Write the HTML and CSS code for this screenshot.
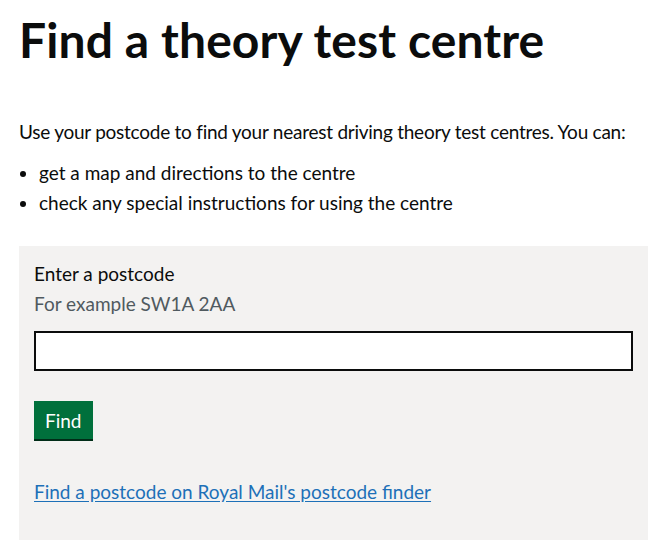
FILE: index.html
```html
<!DOCTYPE html>
<html lang="en">
<head>
    <meta charset="UTF-8">
    <meta name="viewport" content="width=device-width, initial-scale=1.0">
    <title>Find a theory test centre</title>
    <link rel="stylesheet" href="styles.css">
</head>
<body>
    <main class="page">
        <h1 class="title">Find a theory test centre</h1>

        <p class="intro">Use your postcode to find your nearest driving theory test centres. You can:</p>
        <ul class="points">
            <li>get a map and directions to the centre</li>
            <li>check any special instructions for using the centre</li>
        </ul>

        <form class="finder">
            <label class="label" for="postcode">Enter a postcode</label>
            <div class="hint">For example SW1A 2AA</div>
            <input class="input" type="text" id="postcode" name="postcode">
            <button class="find-btn" type="button">Find</button>
            <a class="link" href="#">Find a postcode on Royal Mail's postcode finder</a>
        </form>
    </main>
</body>
</html>
```

FILE: styles.css
```css
body {
    margin: 0;
    font-family: Lato, Arial, sans-serif;
    color: #0b0c0c;
    background-color: #fff;
}

.page {
    width: 629px;
    padding: 0 0 10px 19px;
}

.title {
    font-size: 48px;
    font-weight: 700;
    line-height: 1;
    margin: 16px 0 0;
    letter-spacing: 0.1px;
}

.intro {
    font-size: 19px;
    line-height: 25px;
    letter-spacing: -0.25px;
    margin: 55px 0 16px;
}

.points {
    font-size: 19px;
    line-height: 25px;
    margin: 0 0 31px;
    padding-left: 20px;
}

.points li {
    margin-bottom: 5px;
}

.finder {
    background-color: #f3f2f1;
    padding: 15px 15px 36px;
    display: flex;
    flex-direction: column;
    align-items: flex-start;
}

.label {
    font-size: 19px;
    line-height: 25px;
}

.hint {
    font-size: 19px;
    line-height: 25px;
    color: #505a5f;
    margin: 5px 0 15px;
}

.input {
    box-sizing: border-box;
    width: 100%;
    height: 40px;
    border: 2px solid #0b0c0c;
    background: #fff;
    font-size: 19px;
    padding: 5px;
    margin: 0 0 30px;
}

.find-btn {
    font-family: inherit;
    font-size: 19px;
    line-height: 23px;
    color: #fff;
    background-color: #00703c;
    border: none;
    border-radius: 0;
    box-shadow: 0 2px 0 #002d18;
    padding: 8px 11px 7px;
    margin-bottom: 40px;
    cursor: pointer;
}

.link {
    font-size: 19px;
    line-height: 25px;
    color: #1d70b8;
    text-decoration: underline;
    text-underline-offset: 2px;
}
```
